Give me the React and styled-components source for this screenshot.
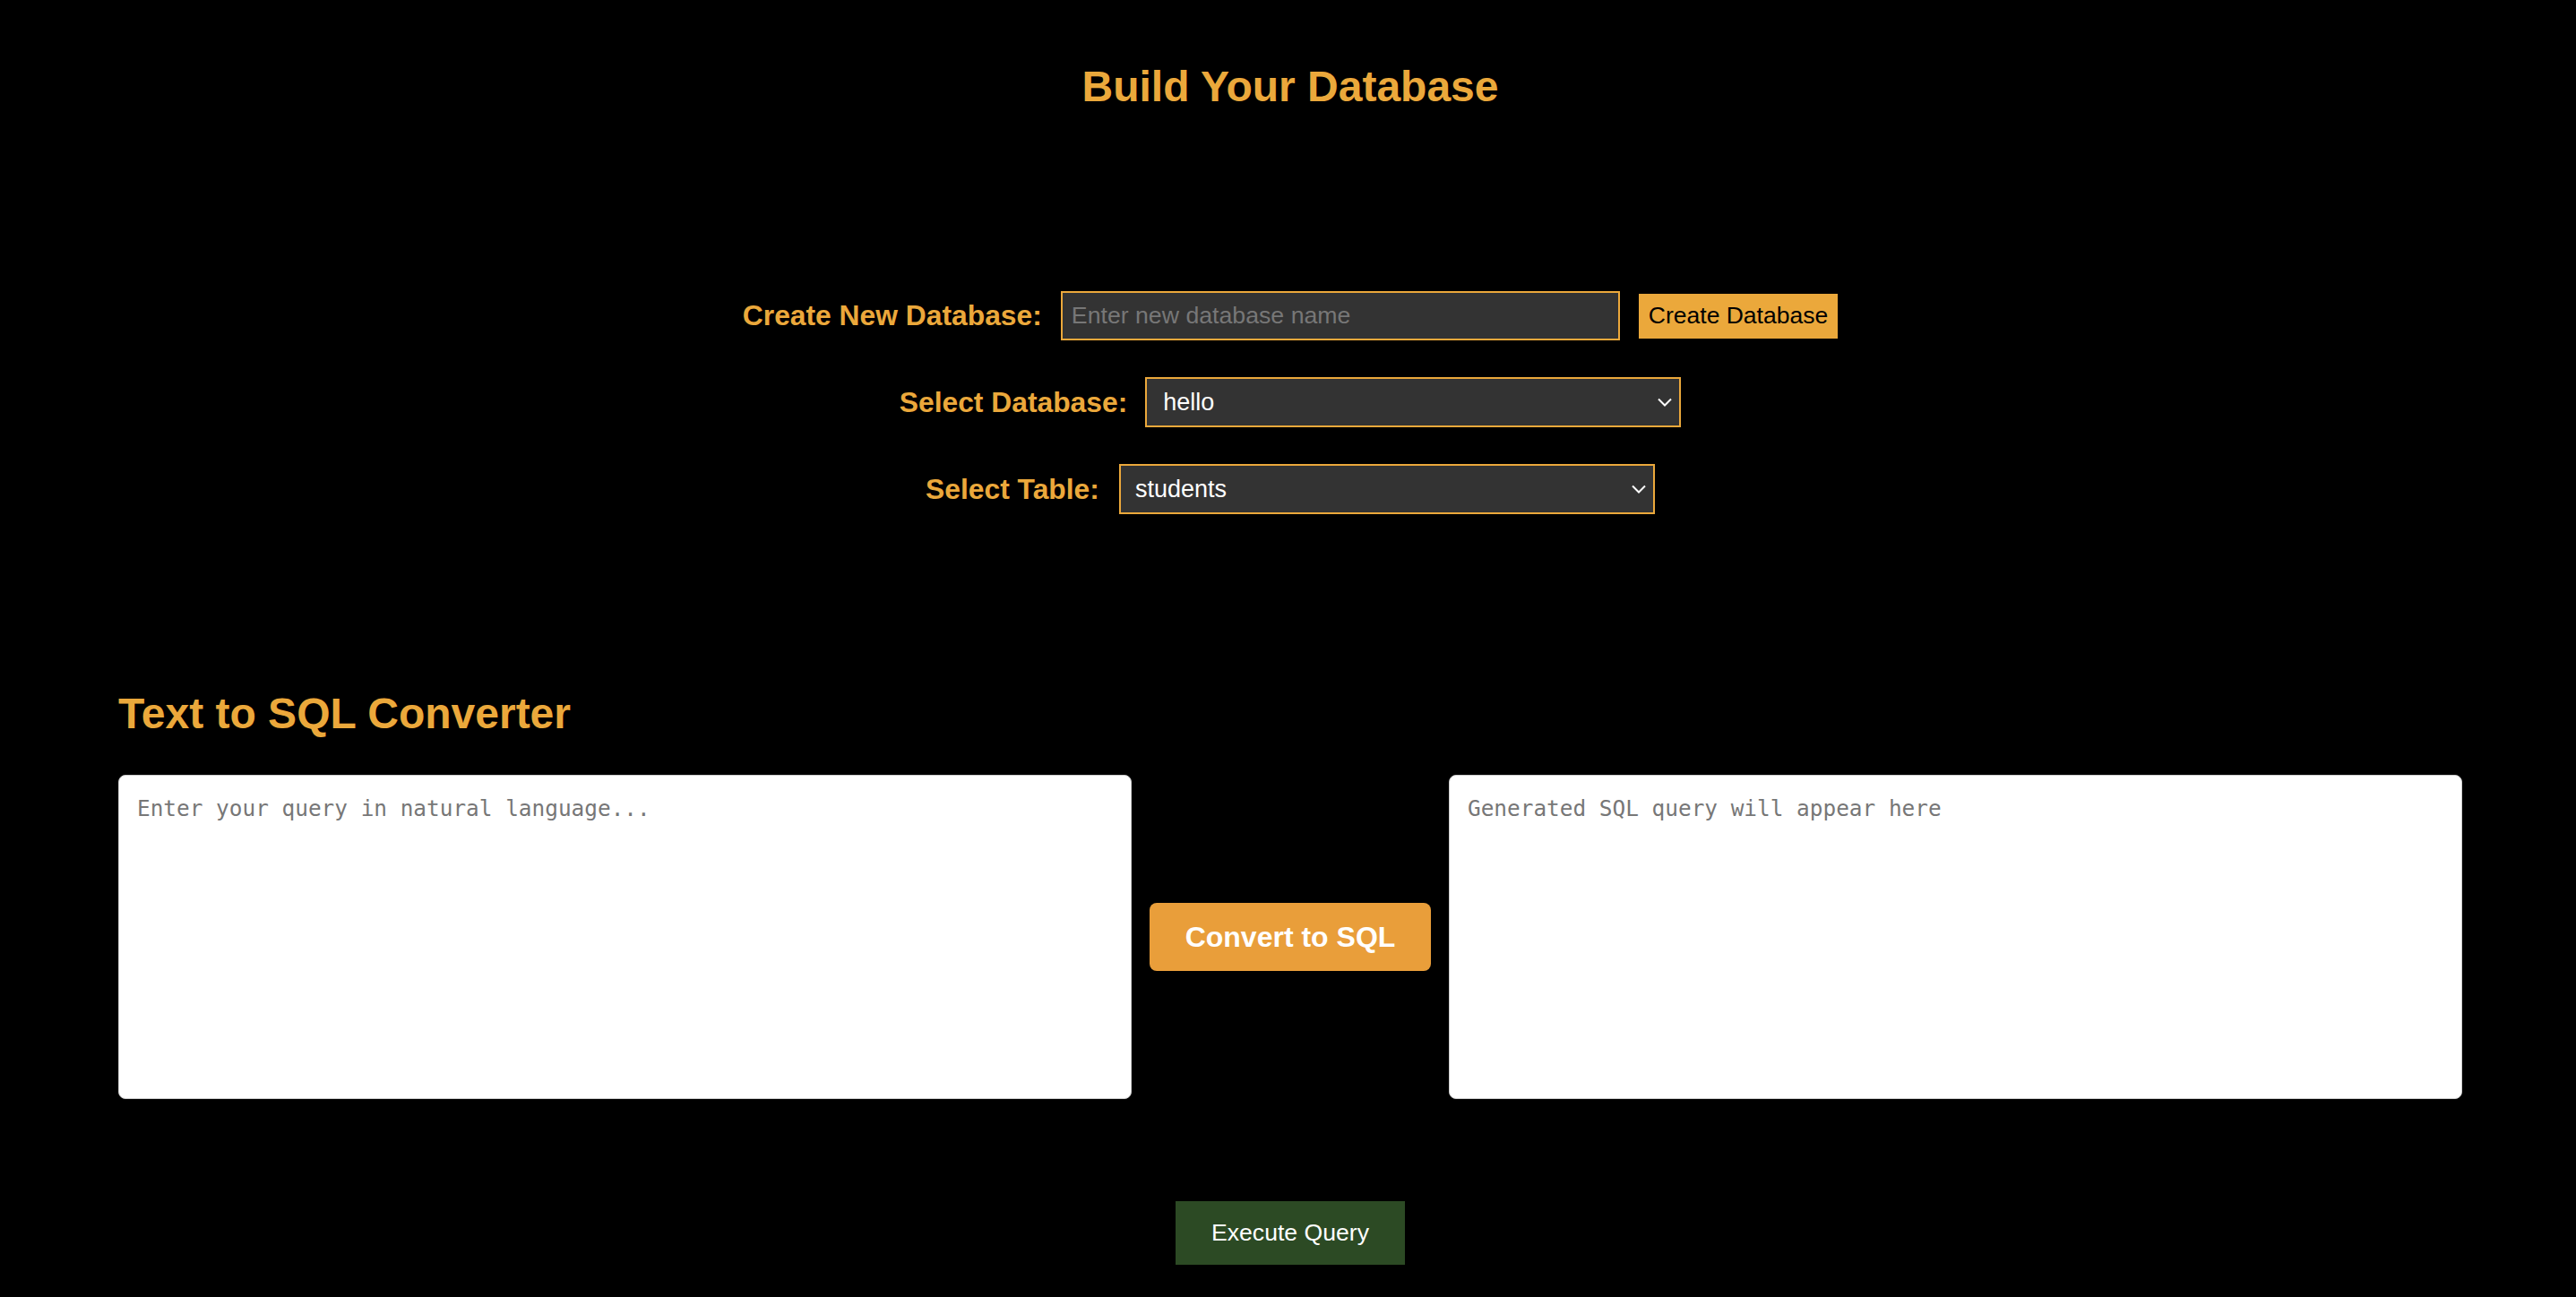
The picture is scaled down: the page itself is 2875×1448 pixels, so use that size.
import React, { useState } from 'react';
import styled, { createGlobalStyle } from 'styled-components';

const orange = '#eba83b';

const Global = createGlobalStyle`
  html, body {
    margin: 0;
    padding: 0;
    background: #000;
  }
  body {
    font-family: "Liberation Sans", Arial, sans-serif;
  }
`;

const Page = styled.div`
  min-height: 100vh;
  background: #000;
  padding: 70px 0 0 5px;
  box-sizing: border-box;
`;

const Title = styled.h1`
  margin: 0;
  text-align: center;
  color: ${orange};
  font-size: 48px;
  line-height: 54px;
  font-weight: bold;
`;

const DbForm = {
  Box: styled.div`
    margin-top: 201px;
    display: flex;
    flex-direction: column;
    align-items: center;
    gap: 41px;
  `,
  Row: styled.div`
    display: flex;
    align-items: center;
    gap: ${p => p.$gap || 21}px;
  `,
  Label: styled.label`
    color: ${orange};
    font-size: 31.8px;
    font-weight: bold;
  `,
  Input: styled.input`
    box-sizing: border-box;
    width: 624px;
    height: 55px;
    padding: 0 10px;
    background: #333;
    border: 2px solid ${orange};
    color: #fff;
    font-family: "Liberation Sans", Arial, sans-serif;
    font-size: 26.7px;
    outline: none;
    &::placeholder {
      color: #777;
    }
  `,
  Button: styled.button`
    box-sizing: border-box;
    height: 50px;
    padding: 0 11px;
    background: ${orange};
    border: none;
    color: #000;
    font-family: "Liberation Sans", Arial, sans-serif;
    font-size: 26.5px;
    cursor: pointer;
  `,
  SelectWrap: styled.div`
    position: relative;
    width: 598px;
    height: 56px;
  `,
  Select: styled.select`
    box-sizing: border-box;
    appearance: none;
    width: 100%;
    height: 100%;
    padding: 0 40px 0 ${p => p.$pad || 18}px;
    background: #333;
    border: 2px solid ${orange};
    border-radius: 0;
    color: #fff;
    font-family: "Liberation Sans", Arial, sans-serif;
    font-size: 27px;
    outline: none;
  `,
  Chevron: styled.svg`
    position: absolute;
    right: 9px;
    top: 50%;
    transform: translateY(-50%);
    pointer-events: none;
  `
};

const Converter = {
  Section: styled.div`
    padding: 0 127px;
  `,
  Heading: styled.h2`
    margin: 196px 0 0;
    color: ${orange};
    font-size: 48px;
    line-height: 54px;
    font-weight: bold;
  `,
  Row: styled.div`
    margin-top: 41px;
    display: flex;
    align-items: center;
    gap: 20px;
  `,
  Area: styled.textarea`
    flex: 1;
    box-sizing: border-box;
    height: 362px;
    padding: 22px 20px 20px;
    background: #fff;
    border: 1.5px solid #ccc;
    border-radius: 8px;
    resize: none;
    font-family: "DejaVu Sans Mono", "Liberation Mono", monospace;
    font-size: 24.4px;
    color: #222;
    outline: none;
    &::placeholder {
      color: #777;
    }
  `,
  Button: styled.button`
    flex: none;
    box-sizing: border-box;
    width: 314px;
    height: 76px;
    background: #e99e3a;
    border: none;
    border-radius: 8px;
    color: #fff;
    font-family: "Liberation Sans", Arial, sans-serif;
    font-size: 32px;
    font-weight: bold;
    cursor: pointer;
  `
};

const Footer = styled.div`
  margin-top: 114px;
  display: flex;
  justify-content: center;
`;

const ExecuteButton = styled.button`
  box-sizing: border-box;
  height: 71px;
  padding: 0 40px;
  background: #2c4a24;
  border: none;
  color: #fff;
  font-family: "Liberation Sans", Arial, sans-serif;
  font-size: 26.6px;
  cursor: pointer;
`;

function Chevron() {
  return (
    <DbForm.Chevron width="18" height="12" viewBox="0 0 18 12">
      <path d="M2 2.5 L9 9.5 L16 2.5" fill="none" stroke="#fff" strokeWidth="2" />
    </DbForm.Chevron>
  );
}

function App() {
  let [dbName, setDbName] = useState('');
  let [db, setDb] = useState('hello');
  let [table, setTable] = useState('students');
  let [query, setQuery] = useState('');
  let [sql, setSql] = useState('');

  return (
    <Page>
      <Global />
      <Title>Build Your Database</Title>

      <DbForm.Box>
        <DbForm.Row $gap={21}>
          <DbForm.Label>Create New Database:</DbForm.Label>
          <DbForm.Input
            placeholder="Enter new database name"
            value={dbName}
            onChange={e => setDbName(e.target.value)}
          />
          <DbForm.Button>Create Database</DbForm.Button>
        </DbForm.Row>
        <DbForm.Row $gap={20}>
          <DbForm.Label>Select Database:</DbForm.Label>
          <DbForm.SelectWrap>
            <DbForm.Select $pad={18} value={db} onChange={e => setDb(e.target.value)}>
              <option value="hello">hello</option>
            </DbForm.Select>
            <Chevron />
          </DbForm.SelectWrap>
        </DbForm.Row>
        <DbForm.Row $gap={22}>
          <DbForm.Label>Select Table:</DbForm.Label>
          <DbForm.SelectWrap>
            <DbForm.Select $pad={16} value={table} onChange={e => setTable(e.target.value)}>
              <option value="students">students</option>
            </DbForm.Select>
            <Chevron />
          </DbForm.SelectWrap>
        </DbForm.Row>
      </DbForm.Box>

      <Converter.Section>
        <Converter.Heading>Text to SQL Converter</Converter.Heading>
        <Converter.Row>
          <Converter.Area
            placeholder="Enter your query in natural language..."
            value={query}
            onChange={e => setQuery(e.target.value)}
          />
          <Converter.Button>Convert to SQL</Converter.Button>
          <Converter.Area
            placeholder="Generated SQL query will appear here"
            value={sql}
            onChange={e => setSql(e.target.value)}
            readOnly
          />
        </Converter.Row>
      </Converter.Section>

      <Footer>
        <ExecuteButton>Execute Query</ExecuteButton>
      </Footer>
    </Page>
  );
}

export default App;
